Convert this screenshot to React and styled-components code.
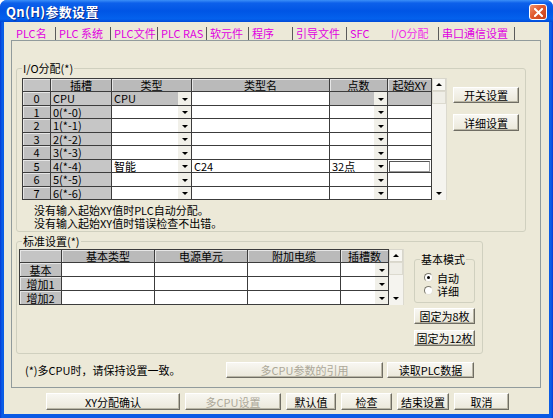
import styled, { createGlobalStyle } from "styled-components";

const GlobalStyle = createGlobalStyle`
  html, body { margin: 0; padding: 0; background: #fff; }
  body {
    font-family: "Noto Sans CJK SC", "Liberation Sans", sans-serif;
    font-size: 11px;
    color: #000;
  }
  * { box-sizing: border-box; }
`;

const Window = styled.div`
  width: 553px;
  height: 418px;
  display: flex;
  flex-direction: column;
  background: linear-gradient(to right, #0839d2 0, #0a5fe8 2px, #0a5ae4 4px, #0a5ae4 549px, #0a5fe8 551px, #0839d2 553px);
  border-radius: 7px 7px 0 0;
  overflow: hidden;
`;

const TitleBar = styled.div`
  height: 22px;
  flex: none;
  display: flex;
  align-items: center;
  justify-content: space-between;
  padding: 0 6px;
  background: linear-gradient(#3b8ff8 0%, #0d60ea 14%, #0055e5 50%, #0461ed 86%, #0049d6 100%);
`;

const Title = styled.div`
  color: #fff;
  font-weight: bold;
  font-size: 13px;
  line-height: 16px;
  letter-spacing: 0.3px;
  text-shadow: 1px 1px 0 #0a2a8a;
  margin-top: 1px;
`;

const CloseButton = styled.div`
  width: 18px;
  height: 16px;
  margin-top: 2px;
  border: 1px solid #fff;
  border-radius: 3px;
  background: linear-gradient(135deg, #f0936f 0%, #e05a2e 45%, #c8401a 100%);
  display: flex;
  align-items: center;
  justify-content: center;
`;

const Client = styled.div`
  flex: 1;
  margin: 0 4px 4px;
  background: #ece9d8;
  display: flex;
  flex-direction: column;
`;

const TabStrip = styled.div`
  height: 18px;
  flex: none;
  display: flex;
  padding-left: 8px;
`;

const Tab = styled.div`
  width: ${(p) => p.$w}px;
  height: 13px;
  margin-top: 5px;
  padding-left: ${(p) => (p.$first ? 4 : 3)}px;
  line-height: 13px;
  white-space: nowrap;
  color: ${(p) => (p.$active ? "#f030e8" : "#e000e0")};
  border-right: 1px solid ${(p) => (p.$noSep ? "transparent" : "#5a5a5a")};
`;

const Panel = styled.div`
  margin-left: 7px;
  width: 530px;
  height: 348px;
  flex: none;
  border: 1px solid #919b9c;
  padding-left: 4px;
  display: flex;
  flex-direction: column;
`;

const Group = styled.div`
  position: relative;
  flex: none;
  width: ${(p) => p.$w}px;
  height: ${(p) => p.$h}px;
  margin-top: ${(p) => p.$mt}px;
  padding: ${(p) => p.$pad};
  border: 1px solid #d0d0bf;
  border-radius: 3px;
`;

const Legend = styled.span`
  position: absolute;
  top: -7px;
  left: 5px;
  padding: 0 1px;
  line-height: 13px;
  background: #ece9d8;
  white-space: nowrap;
`;

const Row = styled.div`
  display: flex;
  align-items: flex-start;
  gap: ${(p) => p.$gap}px;
`;

const IoGrid = styled.div`
  display: grid;
  grid-template-columns: 28px 61px 80px 138px 58px 44px;
  grid-template-rows: 13px repeat(8, 13.5px);
  border-left: 1px solid #3c3c3c;
  border-top: 1px solid #3c3c3c;
`;

const StdGrid = styled.div`
  display: grid;
  grid-template-columns: 42px 93px 93px 93px 48px;
  grid-template-rows: 13px repeat(3, 14px);
  border-left: 1px solid #3c3c3c;
  border-top: 1px solid #3c3c3c;
`;

const Cell = styled.div`
  display: flex;
  align-items: center;
  padding-left: 2px;
  white-space: nowrap;
  line-height: 12px;
  border-right: 1px solid #3c3c3c;
  border-bottom: 1px solid #3c3c3c;
  background: ${(p) => p.$bg || "#fff"};
`;

const HeadCell = styled(Cell)`
  justify-content: center;
  padding-left: 0;
  background: ${(p) => p.$bg || "#bababa"};
  box-shadow: inset 1px 1px 0 #e6e6e6;
`;

const ComboCell = styled(Cell)`
  padding-right: 0;
`;

const CellText = styled.span`
  flex: 1;
`;

const DropBtn = styled.span`
  width: 13px;
  align-self: stretch;
  flex: none;
  background: #f1f0e9;
  display: flex;
  align-items: center;
  justify-content: center;
  &::after {
    content: "";
    margin-top: 2px;
    border-left: 3px solid transparent;
    border-right: 3px solid transparent;
    border-top: 3px solid #000;
  }
`;

const FocusBox = styled.span`
  flex: 1;
  align-self: stretch;
  margin: 1px 1px 0 -1px;
  border: 1px solid #555;
  border-right-color: #999;
  border-bottom-color: #999;
`;

const ScrollBar = styled.div`
  width: 15px;
  height: ${(p) => p.$h}px;
  flex: none;
  display: flex;
  flex-direction: column;
  background: #f5f4ef;
  border-right: 1px solid #dcdacf;
`;

const ScrollBtn = styled.div`
  height: 13px;
  flex: none;
  display: flex;
  align-items: center;
  justify-content: center;
  background: ${(p) => (p.$up ? "#f7f6f1" : "transparent")};
  border: 1px solid ${(p) => (p.$up ? "#d8d6cb" : "transparent")};
  &::after {
    content: "";
    border-left: 3px solid transparent;
    border-right: 3px solid transparent;
    ${(p) => (p.$up ? "border-bottom: 3px solid #000;" : "border-top: 3px solid #000;")}
  }
`;

const Thumb = styled.div`
  height: 13px;
  flex: none;
  background: #efeee7;
  border: 1px solid #dcdacf;
`;

const Track = styled.div`
  flex: 1;
`;

const SideCol = styled.div`
  display: flex;
  flex-direction: column;
  padding-top: ${(p) => p.$pt || 0}px;
`;

const Button = styled.button`
  width: ${(p) => p.$w}px;
  height: ${(p) => p.$h || 16}px;
  margin-top: ${(p) => p.$mt || 0}px;
  flex: none;
  padding: 0;
  font: inherit;
  font-size: 11px;
  line-height: 12px;
  white-space: nowrap;
  color: ${(p) => (p.disabled ? "#aca899" : "#000")};
  background: linear-gradient(#f8f7f2, #ebe8da);
  border: 1px solid;
  border-color: #fff #6f6d63 #6f6d63 #fff;
  box-shadow: inset -1px -1px 0 #b9b6a6;
  border-radius: 0;
`;

const Notes = styled.div`
  margin-top: 4px;
  padding-left: 12px;
  line-height: 13px;
`;

const ModeBox = styled.div`
  position: relative;
  width: 61px;
  height: 44px;
  margin-top: 10px;
  padding: 11px 0 0 9px;
  border: 1px solid #d0d0bf;
  border-radius: 3px;
`;

const RadioRow = styled.div`
  height: 13px;
  display: flex;
  align-items: center;
  gap: 4px;
`;

const Radio = styled.span`
  width: 9px;
  height: 9px;
  flex: none;
  border-radius: 50%;
  border: 1px solid;
  border-color: #7a786c #e4e2d6 #e4e2d6 #7a786c;
  background: #fff;
  display: flex;
  align-items: center;
  justify-content: center;
  &::after {
    content: "";
    width: 3px;
    height: 3px;
    border-radius: 50%;
    background: ${(p) => (p.$on ? "#000" : "transparent")};
  }
`;

const Footer = styled.div`
  margin-top: 8px;
  height: 16px;
  display: flex;
  align-items: center;
  gap: 4px;
  padding-left: 9px;
`;

const FootNote = styled.span`
  width: 197px;
  flex: none;
  white-space: nowrap;
`;

const BottomBar = styled.div`
  margin-top: 5px;
  display: flex;
  gap: 5px;
  padding-left: 42px;
`;

const tabs = [
  ["PLC名", 44],
  ["PLC 系统", 55],
  ["PLC文件", 47],
  ["PLC RAS", 49],
  ["软元件", 42],
  ["程序", 44],
  ["引导文件", 54],
  ["SFC", 41],
  ["I/O分配", 51],
  ["串口通信设置", 76],
];

const ioRows = [
  { slot: "CPU", type: "CPU", off: true },
  { slot: "0(*-0)" },
  { slot: "1(*-1)" },
  { slot: "2(*-2)" },
  { slot: "3(*-3)" },
  { slot: "4(*-4)", type: "智能", name: "C24", pts: "32点", focus: true },
  { slot: "5(*-5)" },
  { slot: "6(*-6)" },
];

const GRAY = "#c0c0c0";

const Scroll = ({ h }) => (
  <ScrollBar $h={h}>
    <ScrollBtn $up />
    <Thumb />
    <Track />
    <ScrollBtn />
  </ScrollBar>
);

export default function App() {
  return (
    <>
      <GlobalStyle />
      <Window>
        <TitleBar>
          <Title>Qn(H)参数设置</Title>
          <CloseButton>
            <svg width="9" height="9" viewBox="0 0 9 9">
              <path d="M1 1L8 8M8 1L1 8" stroke="#fff" strokeWidth="2" strokeLinecap="square" />
            </svg>
          </CloseButton>
        </TitleBar>
        <Client>
          <TabStrip>
            {tabs.map(([label, w], i) => (
              <Tab key={label} $w={w} $first={i === 0} $noSep={label === "SFC"} $active={label === "I/O分配"}>
                {label}
              </Tab>
            ))}
          </TabStrip>
          <Panel>
            <Group $w={510} $h={164} $mt={27} $pad="9px 0 0 5px">
              <Legend>I/O分配(*)</Legend>
              <Row $gap={6}>
                <Row $gap={0}>
                  <IoGrid>
                    <HeadCell $bg="#c4c4c4" />
                    <HeadCell>插槽</HeadCell>
                    <HeadCell>类型</HeadCell>
                    <HeadCell>类型名</HeadCell>
                    <HeadCell>点数</HeadCell>
                    <HeadCell>起始XY</HeadCell>
                    {ioRows.map((r, i) => (
                      <>
                        <HeadCell key={`i${i}`} $bg={GRAY}>{i}</HeadCell>
                        <Cell key={`s${i}`} $bg="#c6c6c6">{r.slot}</Cell>
                        <ComboCell key={`t${i}`} $bg={r.off ? GRAY : "#fff"}>
                          <CellText>{r.type}</CellText>
                          <DropBtn />
                        </ComboCell>
                        <Cell key={`n${i}`}>{r.name}</Cell>
                        <ComboCell key={`p${i}`} $bg={r.off ? GRAY : "#fff"}>
                          <CellText>{r.pts}</CellText>
                          <DropBtn />
                        </ComboCell>
                        <Cell key={`x${i}`} $bg={r.off ? GRAY : "#fff"}>
                          {r.focus && <FocusBox />}
                        </Cell>
                      </>
                    ))}
                  </IoGrid>
                  <Scroll h={122} />
                </Row>
                <SideCol $pt={9}>
                  <Button $w={66}>开关设置</Button>
                  <Button $w={66} $h={17} $mt={11}>详细设置</Button>
                </SideCol>
              </Row>
              <Notes>
                没有输入起始XY值时PLC自动分配。
                <br />
                没有输入起始XY值时错误检查不出错。
              </Notes>
            </Group>

            <Group $w={467} $h={113} $mt={9} $pad="7px 0 0 2px">
              <Legend>标准设置(*)</Legend>
              <Row $gap={10}>
                <Row $gap={0}>
                  <StdGrid>
                    <HeadCell $bg="#c4c4c4" />
                    <HeadCell>基本类型</HeadCell>
                    <HeadCell>电源单元</HeadCell>
                    <HeadCell>附加电缆</HeadCell>
                    <HeadCell>插槽数</HeadCell>
                    {["基本", "增加1", "增加2"].map((label) => (
                      <>
                        <HeadCell key={`h${label}`} $bg={GRAY}>{label}</HeadCell>
                        <Cell key={`a${label}`} />
                        <Cell key={`b${label}`} />
                        <Cell key={`c${label}`} />
                        <ComboCell key={`d${label}`}>
                          <CellText />
                          <DropBtn />
                        </ComboCell>
                      </>
                    ))}
                  </StdGrid>
                  <Scroll h={56} />
                </Row>
                <SideCol>
                  <ModeBox>
                    <Legend>基本模式</Legend>
                    <RadioRow>
                      <Radio $on />
                      自动
                    </RadioRow>
                    <RadioRow>
                      <Radio />
                      详细
                    </RadioRow>
                  </ModeBox>
                  <Button $w={61} $mt={5}>固定为8枚</Button>
                  <Button $w={61} $mt={6}>固定为12枚</Button>
                </SideCol>
              </Row>
            </Group>

            <Footer>
              <FootNote>(*)多CPU时，请保持设置一致。</FootNote>
              <Button $w={157} disabled>多CPU参数的引用</Button>
              <Button $w={87}>读取PLC数据</Button>
            </Footer>
          </Panel>

          <BottomBar>
            <Button $w={134} $h={17}>XY分配确认</Button>
            <Button $w={96} $h={17} disabled>多CPU设置</Button>
            <Button $w={50} $h={17}>默认值</Button>
            <Button $w={51} $h={17}>检查</Button>
            <Button $w={52} $h={17}>结束设置</Button>
            <Button $w={55} $h={17}>取消</Button>
          </BottomBar>
        </Client>
      </Window>
    </>
  );
}
